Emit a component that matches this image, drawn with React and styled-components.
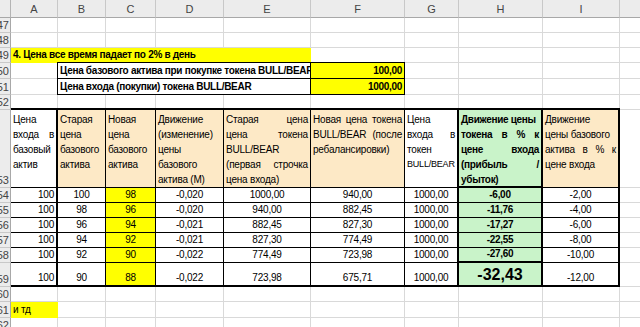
import React from "react";
import styled, { createGlobalStyle } from "styled-components";

const GlobalStyle = createGlobalStyle`
  html, body {
    margin: 0;
    padding: 0;
    background: #fff;
    overflow: hidden;
  }
  body {
    font-family: "Liberation Sans", Arial, sans-serif;
  }
`;

const YELLOW = "#ffff00";
const PEACH = "#fde9c6";
const GREEN = "#c9f3c9";
const GRID = "#d9d9d9";

const WIDTHS = [11, 47, 48, 50, 68, 87, 94, 54, 84, 77, 40];
const LETTERS = ["A", "B", "C", "D", "E", "F", "G", "H", "I", ""];
const ROWS = [47, 48, 49, 50, 51, 52, 53, 54, 55, 56, 57, 58, 59, 60, 61, 62];
const HEIGHTS = {
  47: 15, 48: 15, 49: 15, 50: 16, 51: 16, 52: 15, 53: 78,
  54: 15, 55: 15, 56: 15, 57: 15, 58: 15, 59: 24, 60: 15, 61: 16, 62: 15,
};

const Sheet = styled.div`
  display: grid;
  grid-template-columns: ${WIDTHS.map((w) => w + "px").join(" ")};
  grid-template-rows: 18px ${ROWS.map((r) => HEIGHTS[r] + "px").join(" ")};
  width: 660px;
  height: 327px;
  overflow: hidden;
`;

const Corner = styled.div`
  background: #ececec;
  border-right: 1px solid #b4b4b4;
  border-bottom: 1px solid #a8a8a8;
  box-sizing: border-box;
`;

const ColHead = styled.div`
  background: #ececec;
  border-right: 1px solid #c8c8c8;
  border-bottom: 1px solid #a8a8a8;
  box-sizing: border-box;
  color: #444;
  font-size: 11px;
  display: flex;
  align-items: center;
  justify-content: center;
  padding-top: 1px;
`;

const RowHead = styled.div`
  background: #ececec;
  border-right: 1px solid #a8a8a8;
  border-bottom: 1px solid #c8c8c8;
  box-sizing: border-box;
  color: #444;
  font-size: 11px;
  overflow: hidden;
  display: flex;
  align-items: flex-end;
  justify-content: flex-end;
  padding: 0 1px 1px 0;
  white-space: nowrap;
`;

const side = (w) => (w ? `${w}px solid #000` : "none");

const Cell = styled.div`
  grid-column: span ${(p) => p.$span || 1};
  box-sizing: border-box;
  background: ${(p) => p.$fill || "#fff"};
  border-top: ${(p) => side(p.$bt)};
  border-left: ${(p) => side(p.$bl)};
  border-right: ${(p) => (p.$br ? side(p.$br) : p.$fill ? `1px solid ${p.$fill}` : `1px solid ${GRID}`)};
  border-bottom: ${(p) => (p.$bb ? side(p.$bb) : p.$fill ? `1px solid ${p.$fill}` : `1px solid ${GRID}`)};
  margin-top: ${(p) => -(p.$bt || 0)}px;
  margin-left: ${(p) => -(p.$bl || 0)}px;
  z-index: ${(p) => (p.$bt || p.$bl || p.$br || p.$bb ? 1 : 0)};
  display: flex;
  flex-direction: column;
  justify-content: ${(p) => (p.$top ? "flex-start" : "flex-end")};
  padding: ${(p) => (p.$top ? "2px 2px 0 2px" : "0 2px 1px 2px")};
  overflow: hidden;
  color: #000;
  font-size: ${(p) => p.$size || 10}px;
  font-weight: ${(p) => (p.$bold ? 700 : 400)};
  letter-spacing: ${(p) => (p.$size ? 0 : p.$bold ? -0.3 : -0.2)}px;
`;

const Value = styled.div`
  text-align: ${(p) => p.$align || "left"};
  white-space: nowrap;
  line-height: ${(p) => (p.$big ? "18px" : "13px")};
`;

const Line = styled.div`
  line-height: 15px;
  white-space: nowrap;
  text-align: left;
  text-align-last: ${(p) => (p.$just ? "justify" : "left")};
  font-size: ${(p) => (p.$tight ? "9px" : "inherit")};
  letter-spacing: ${(p) => (p.$tight ? "-0.2px" : "inherit")};
`;

// "~" marks a justified line, "!" a narrowed one
const header = [
  { fill: "#fff", lines: ["Цена", "~входа в", "базовый", "актив"] },
  { fill: PEACH, lines: ["Старая", "цена", "базового", "актива"] },
  { fill: PEACH, lines: ["Новая", "цена", "базового", "актива"] },
  { fill: PEACH, lines: ["Движение", "(изменение)", "цены", "базового", "актива (M)"] },
  { fill: PEACH, lines: ["~Старая цена", "~цена токена", "BULL/BEAR", "~(первая строчка", "цена входа)"] },
  { fill: PEACH, lines: ["~Новая цена токена", "~BULL/BEAR (после", "ребалансировки)"] },
  { fill: "#fff", lines: ["Цена", "~входа в", "токен", "!BULL/BEAR"] },
  { fill: GREEN, bold: true, lines: ["Движение цены", "~токена в % к", "~цене входа", "~(прибыль /", "убыток)"] },
  { fill: PEACH, lines: ["Движение", "цены базового", "~актива в % к", "цене входа"] },
];

const data = [
  ["100", "100", "98", "-0,020", "1000,00", "940,00", "1000,00", "-6,00", "-2,00"],
  ["100", "98", "96", "-0,020", "940,00", "882,45", "1000,00", "-11,76", "-4,00"],
  ["100", "96", "94", "-0,021", "882,45", "827,30", "1000,00", "-17,27", "-6,00"],
  ["100", "94", "92", "-0,021", "827,30", "774,49", "1000,00", "-22,55", "-8,00"],
  ["100", "92", "90", "-0,022", "774,49", "723,98", "1000,00", "-27,60", "-10,00"],
  ["100", "90", "88", "-0,022", "723,98", "675,71", "1000,00", "-32,43", "-12,00"],
];

// borders of the main table (rows 53..59, columns A..I)
function tableBorders(r, c) {
  const b = { bt: 0, br: 1, bb: 1, bl: 0 };
  if (r === 53) b.bt = 2;
  if (r === 59) b.bb = 2;
  if (c === 0 || c === 6 || c === 7 || c === 8) b.br = 2;
  if (c === 7 && (r === 53 || r === 58 || r === 59)) b.bb = 2;
  return b;
}

function buildRow(r) {
  const cells = [];
  if (r === 49) {
    cells.push({ span: 5, fill: YELLOW, bold: true, text: "4. Цена все время падает по 2% в день" });
  } else if (r === 50 || r === 51) {
    cells.push({});
    cells.push({
      span: 4, bold: true, bt: r === 50 ? 1 : 0, bl: 1, br: 1, bb: 1,
      text: r === 50 ? "Цена базового актива при покупке токена BULL/BEAR" : "Цена входа (покупки) токена BULL/BEAR",
    });
    cells.push({
      fill: YELLOW, bold: true, align: "right", bt: r === 50 ? 1 : 0, br: 1, bb: 1,
      text: r === 50 ? "100,00" : "1000,00",
    });
  } else if (r === 53) {
    header.forEach((h, c) => cells.push({ ...tableBorders(r, c), fill: h.fill, bold: h.bold, lines: h.lines }));
  } else if (r >= 54 && r <= 59) {
    data[r - 54].forEach((v, c) => {
      const cell = { ...tableBorders(r, c), text: v, align: c === 0 ? "right" : "center" };
      if (c === 2) cell.fill = YELLOW;
      if (c === 7) {
        cell.fill = GREEN;
        cell.bold = true;
      }
      if (c === 7 && r === 59) {
        cell.size = 16;
        cell.big = true;
      }
      cells.push(cell);
    });
  } else if (r === 61) {
    cells.push({ fill: YELLOW, text: "и тд" });
  }
  let used = cells.reduce((s, c) => s + (c.span || 1), 0);
  while (used < 10) {
    cells.push({});
    used += 1;
  }
  return cells;
}

function SheetCell({ cell }) {
  return (
    <Cell
      $span={cell.span}
      $fill={cell.fill}
      $bold={cell.bold}
      $bt={cell.bt}
      $bl={cell.bl}
      $br={cell.br}
      $bb={cell.bb}
      $size={cell.size}
      $top={!!cell.lines}
    >
      {cell.lines
        ? cell.lines.map((l, i) => (
            <Line key={i} $just={l.startsWith("~")} $tight={l.startsWith("!")}>
              {l.replace(/^[~!]/, "")}
            </Line>
          ))
        : cell.text && (
            <Value $align={cell.align} $big={cell.big}>
              {cell.text}
            </Value>
          )}
    </Cell>
  );
}

export default function App() {
  return (
    <>
      <GlobalStyle />
      <Sheet>
        <Corner />
        {LETTERS.map((l, i) => (
          <ColHead key={i}>{l}</ColHead>
        ))}
        {ROWS.map((r) => (
          <React.Fragment key={r}>
            <RowHead>{r}</RowHead>
            {buildRow(r).map((cell, i) => (
              <SheetCell key={i} cell={cell} />
            ))}
          </React.Fragment>
        ))}
      </Sheet>
    </>
  );
}
